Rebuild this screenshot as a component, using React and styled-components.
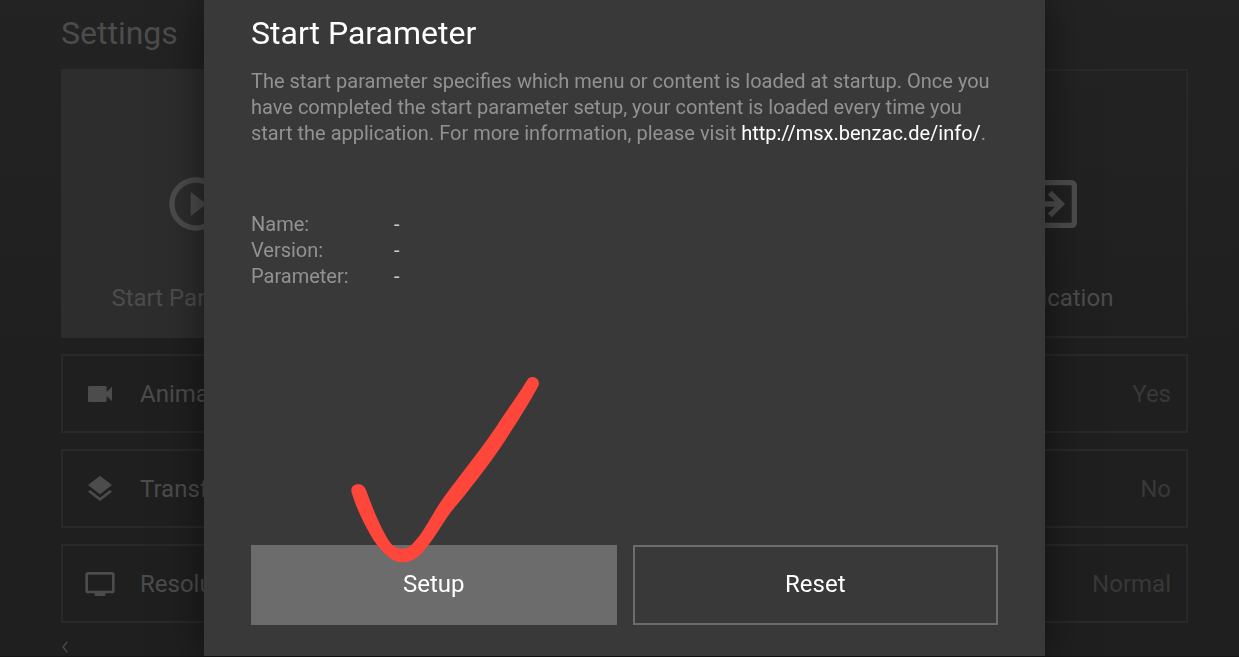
import React from 'react';
import styled, { createGlobalStyle } from 'styled-components';
import { MdPlayCircleOutline, MdExitToApp, MdVideocam, MdLayers, MdTv } from 'react-icons/md';

const GlobalStyle = createGlobalStyle`
  * {
    box-sizing: border-box;
  }
  body {
    margin: 0;
    background: #202020;
    font-family: Roboto, "Liberation Sans", sans-serif;
  }
  button {
    font-family: inherit;
    cursor: pointer;
  }
`

const Page = styled.main`
  display: flex;
  flex-direction: column;
  min-height: 100vh;
  padding: 13px 51px 0 61px;
  background: linear-gradient(#232323, #1f1f1f 55%);
  border-bottom: 1px solid #141414;
  color: #4c4c4c;
`
const PageTitle = styled.h1`
  margin: 0 0 16px;
  font-size: 32px;
  line-height: 40px;
  font-weight: 400;
`
const Tiles = styled.div`
  display: grid;
  grid-template-columns: repeat(4, 1fr);
  gap: 16px;
  margin-bottom: 16px;
`
const Tile = styled.button`
  grid-column: ${props => props.$column};
  display: flex;
  flex-direction: column;
  align-items: center;
  gap: 46px;
  height: 269px;
  padding: 101px 0 0;
  background: ${props => props.$selected ? '#2d2d2d' : 'transparent'};
  border: 2px solid ${props => props.$selected ? '#2d2d2d' : '#292929'};
  color: inherit;
  font-size: 24px;
  line-height: 32px;
`
const Rows = styled.div`
  display: flex;
  flex-direction: column;
  gap: 16px;
`
const Row = styled.button`
  display: flex;
  align-items: center;
  gap: 24px;
  height: 79px;
  padding: 0 15px 0 21px;
  background: transparent;
  border: 2px solid #292929;
  color: inherit;
  font-size: 24px;
  line-height: 32px;
`
const RowValue = styled.span`
  margin-left: auto;
  color: #383838;
`
const Footer = styled.footer`
  display: flex;
  padding: 18px 1px 0;
`

const Overlay = styled.div`
  position: fixed;
  inset: 0;
  display: flex;
  justify-content: center;
  padding: 0 0 1px 10px;
`
const Dialog = styled.section`
  display: flex;
  flex-direction: column;
  width: 100%;
  max-width: 841px;
  padding: 13px 47px 31px;
  background: #393939;
  box-shadow: 0 0 40px rgba(0, 0, 0, 0.5);
  color: #929292;
  font-size: 20px;
  line-height: 26px;
`
const DialogTitle = styled.h2`
  margin: 0 0 15px;
  color: #fff;
  font-size: 32px;
  line-height: 40px;
  font-weight: 400;
`
const Description = styled.p`
  margin: 0 0 65px;
`
const InfoLink = styled.a`
  color: #fff;
  text-decoration: none;
`
const Details = styled.dl`
  display: grid;
  grid-template-columns: 143px 1fr;
  margin: 0;
`
const DetailName = styled.dt``
const DetailValue = styled.dd`
  margin: 0;
  color: #d0d0d0;
`
const Actions = styled.div`
  position: relative;
  display: grid;
  grid-template-columns: 1fr 1fr;
  gap: 16px;
  margin-top: auto;
`
const ActionButton = styled.button`
  height: 80px;
  padding: 0 0 2px;
  background: ${props => props.$focused ? '#6c6c6c' : 'transparent'};
  border: 2px solid #6c6c6c;
  color: #fff;
  font-size: 24px;
  line-height: 32px;
`
const CheckMark = styled.svg`
  position: absolute;
  left: 69px;
  top: -185px;
  width: 240px;
  height: 220px;
  pointer-events: none;
`

const rows = [
  { icon: MdVideocam, label: 'Animations', value: 'Yes' },
  { icon: MdLayers, label: 'Transformation', value: 'No' },
  { icon: MdTv, label: 'Resolution', value: 'Normal' },
]

const details = ['Name', 'Version', 'Parameter']

const Settings = () => {
  return (
    <Page>
      <PageTitle>Settings</PageTitle>
      <Tiles>
        <Tile $column={1} $selected><MdPlayCircleOutline size={64} />Start Parameter</Tile>
        <Tile $column={4}><MdExitToApp size={64} />Application</Tile>
      </Tiles>
      <Rows>
        {rows.map(({ icon: Icon, label, value }) => (
          <Row key={label}>
            <Icon size={32} />
            <span>{label}</span>
            <RowValue>{value}</RowValue>
          </Row>
        ))}
      </Rows>
      <Footer>
        <svg width="6" height="12" viewBox="0 0 6 12" fill="none" stroke="currentColor" strokeWidth="1.3">
          <path d="M5.3 0.7L1 6l4.3 5.3" />
        </svg>
      </Footer>
    </Page>
  )
}

const StartParameterDialog = () => {
  return (
    <Overlay>
      <Dialog role="dialog" aria-labelledby="dialog-title">
        <DialogTitle id="dialog-title">Start Parameter</DialogTitle>
        <Description>
          The start parameter specifies which menu or content is loaded at startup. Once you
          have completed the start parameter setup, your content is loaded every time you
          start the application. For more information, please visit <InfoLink href="http://msx.benzac.de/info/">http://msx.benzac.de/info/</InfoLink>.
        </Description>
        <Details>
          {details.map(name => (
            <React.Fragment key={name}>
              <DetailName>{name}:</DetailName>
              <DetailValue>-</DetailValue>
            </React.Fragment>
          ))}
        </Details>
        <Actions>
          <ActionButton $focused>Setup</ActionButton>
          <ActionButton>Reset</ActionButton>
          <CheckMark viewBox="0 0 720 660" aria-hidden="true">
            <path
              fill="#ff463b"
              d="M95 399C91 384 99 373 114 373C127 373 133 379 138 390C147 414 156 439 165 460C177 488 190 516 205 540C217 558 229 566 245 566C259 566 267 562 275 554C288 541 300 526 310 510C328 483 342 455 360 428C398 374 448 312 490 255C510 228 528 202 545 175C572 135 598 98 622 59C627 52 635 50 642 52C654 55 660 67 655 78C630 124 603 168 575 211C556 242 536 271 515 300C490 335 462 370 435 405C415 429 398 448 380 474C361 502 346 529 325 555C314 571 301 587 285 596C272 604 260 607 245 607C228 607 213 598 200 586C184 572 172 556 160 539C134 496 111 448 95 399Z"
            />
          </CheckMark>
        </Actions>
      </Dialog>
    </Overlay>
  )
}

const App = () => {
  return (
    <>
      <GlobalStyle />
      <Settings />
      <StartParameterDialog />
    </>
  )
}

export default App;
